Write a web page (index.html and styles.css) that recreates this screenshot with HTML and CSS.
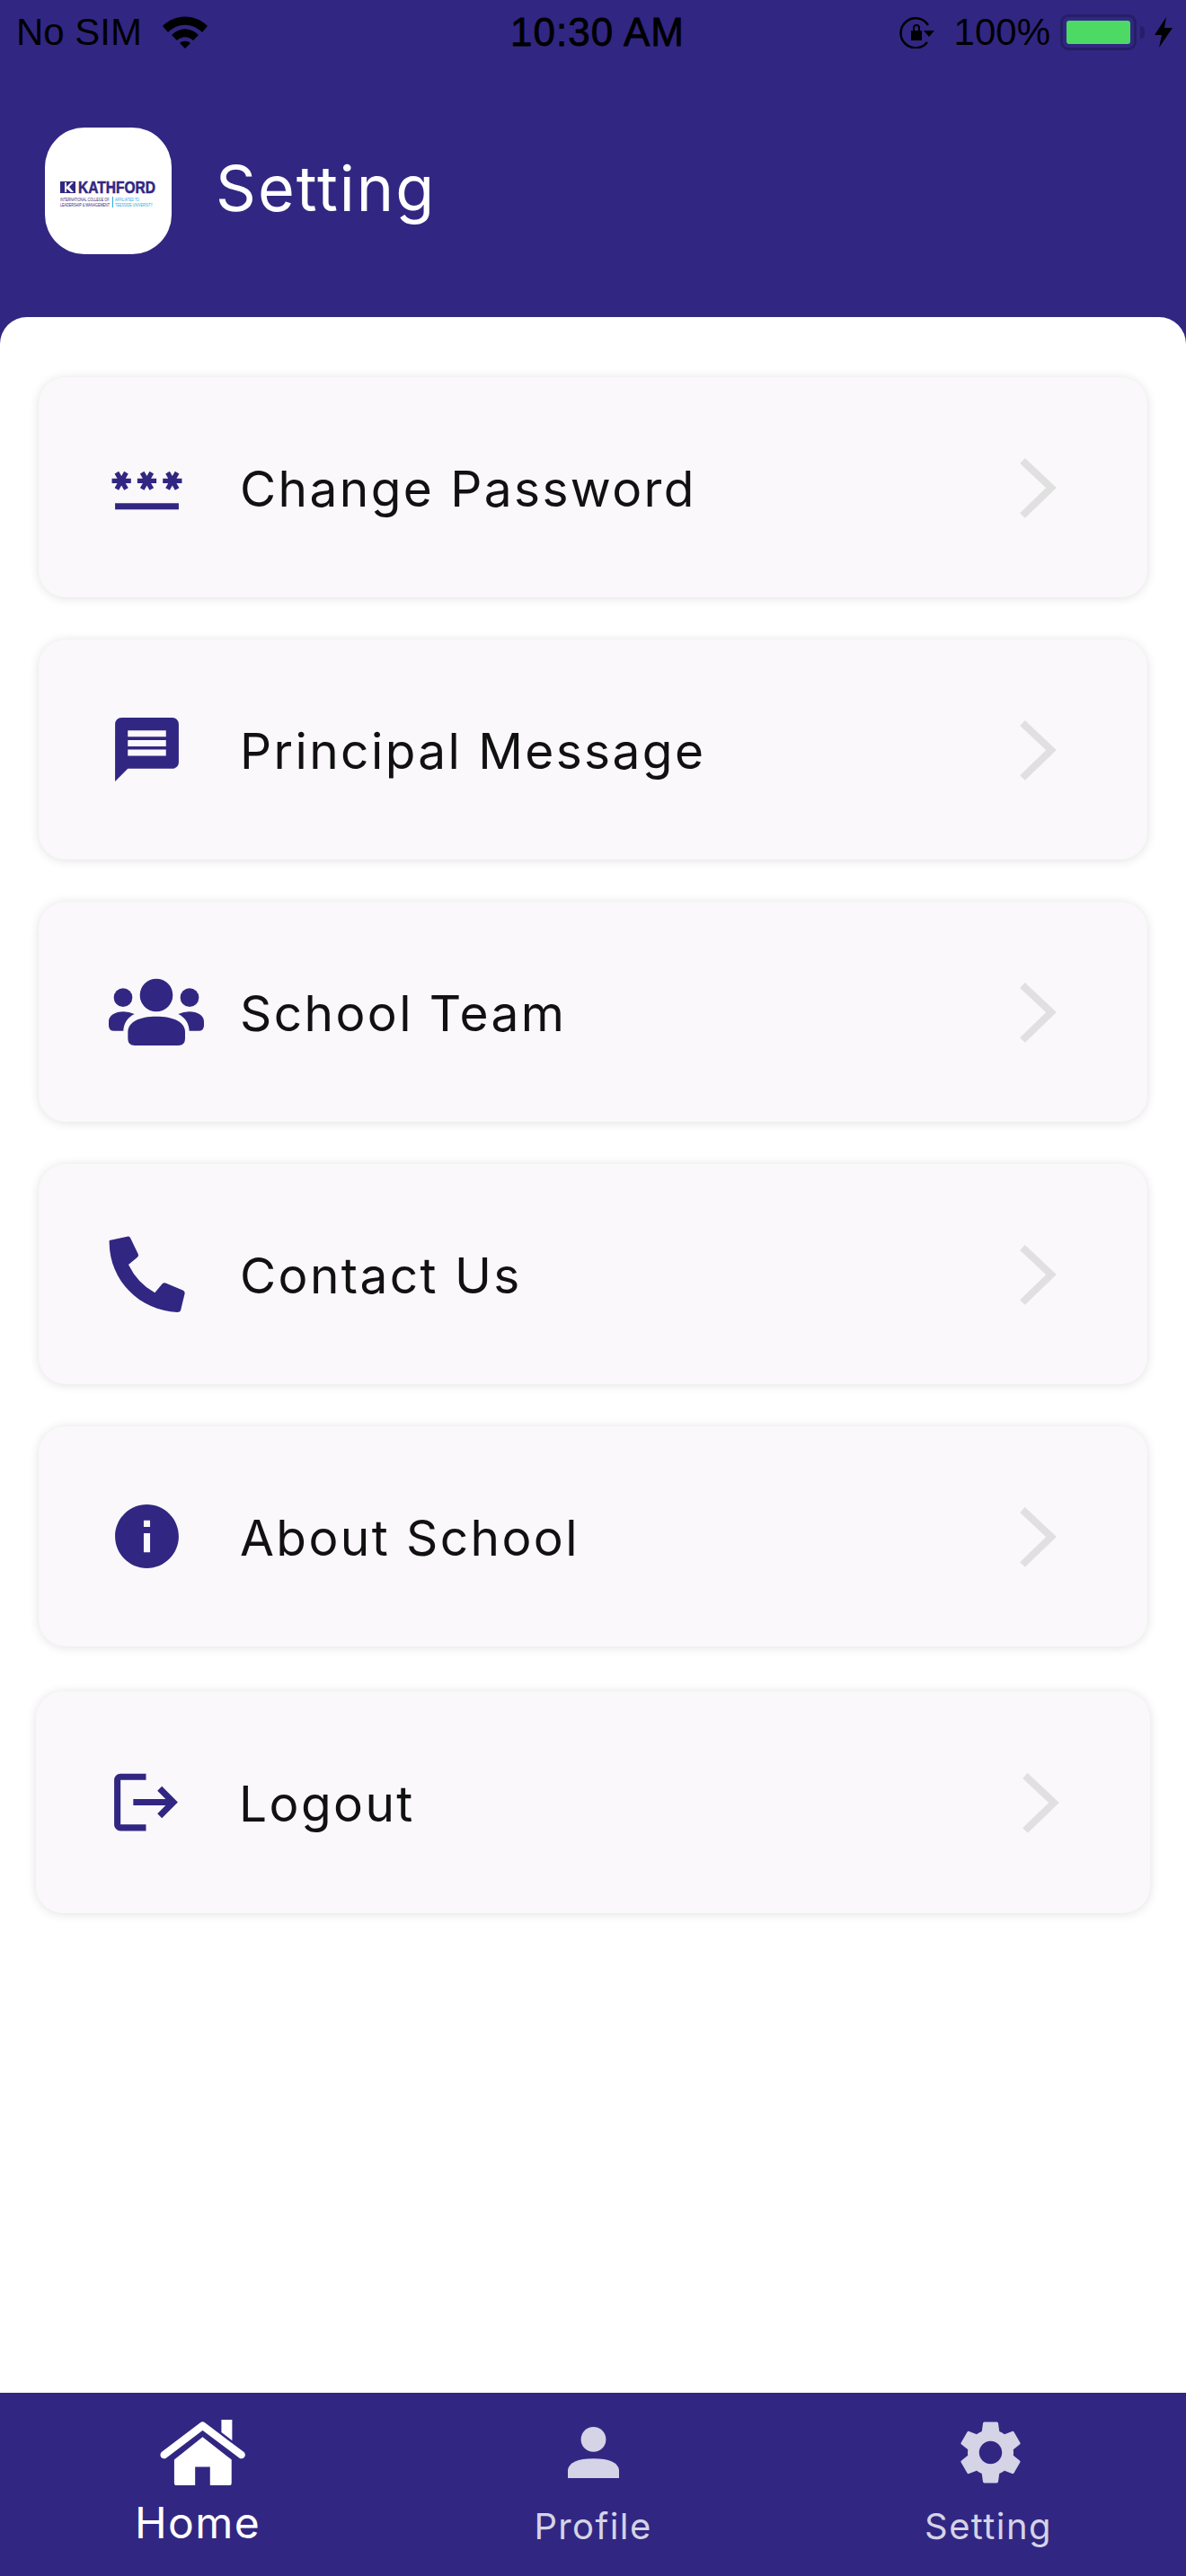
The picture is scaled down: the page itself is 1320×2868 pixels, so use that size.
FILE: index.html
```html
<!DOCTYPE html>
<html lang="en">
<head>
    <meta charset="UTF-8">
    <meta name="viewport" content="width=device-width, initial-scale=1.0">
    <title>Setting</title>
    <link rel="stylesheet" href="styles.css">
</head>
<body>
    <div class="page">
        <div class="status-bar">
            <div class="status-left">
                <span>No SIM</span>
                <svg class="wifi" viewBox="0 0 50 36">
                    <path d="M0 11C14-3 36-3 50 11L44 18C33 7 17 7 6 18Z"/>
                    <path d="M10 21C19 12 31 12 40 21L34 27C28 22 22 22 16 27Z"/>
                    <path d="M19 30C22 27 28 27 31 30L25 36Z"/>
                </svg>
            </div>
            <div class="status-time">10:30 AM</div>
            <div class="status-right">
                <svg class="rotation-lock" viewBox="0 0 40 36">
                    <path d="M32 29A16.500 16.500 0 1 1 33 10" fill="none" stroke="#000" stroke-width="2.500"/>
                    <path d="M28 16H40L34 23Z"/>
                    <path d="M14 16h12v11H14zM16 16v-3a4 4 0 0 1 8 0v3h-2v-3a2 2 0 0 0-4 0v3z"/>
                </svg>
                <span class="battery-text">100%</span>
                <span class="battery"><span class="battery-fill"></span></span>
                <span class="battery-nib"></span>
                <svg class="bolt" viewBox="0 0 20 34"><path d="M13 0L0 20H8L5 34L20 12H11Z"/></svg>
            </div>
        </div>

        <header class="app-header">
            <div class="logo">
                <svg viewBox="0 0 141 141">
                    <rect x="17" y="60" width="17" height="13" fill="#312782"/>
                    <path d="M22 61h2v5l5-5h3l-5 5 5 6h-3l-5-4v4h-2z" fill="#fff"/>
                    <text class="logo-name" x="37" y="73" textLength="86" lengthAdjust="spacingAndGlyphs">KATHFORD</text>
                    <g transform="translate(17 0) scale(0.75 1)">
                        <text class="logo-sub" y="82">INTERNATIONAL COLLEGE OF</text>
                        <text class="logo-sub" y="88">LEADERSHIP &amp; MANAGEMENT</text>
                    </g>
                    <rect x="75" y="77" width="1" height="12" fill="#27aae1"/>
                    <g transform="translate(78 0) scale(0.75 1)">
                        <text class="logo-sub logo-sub-blue" y="82">AFFILIATED TO</text>
                        <text class="logo-sub logo-sub-blue" y="88">TEESSIDE UNIVERSITY</text>
                    </g>
                </svg>
            </div>
            <h1>Setting</h1>
        </header>

        <main class="sheet">
            <a class="card">
                <span class="card-icon">
                    <svg class="icon" viewBox="0 0 24 24"><path d="M2 17h20v2H2v-2zm1.150-4.050L4 11.470l.85 1.480 1.300-.75-.85-1.480H7v-1.500H5.300l.85-1.470L4.850 7 4 8.470 3.150 7l-1.300.75.85 1.470H1v1.500h1.700l-.85 1.480 1.300.75zm6.700-.75 1.300.75.85-1.480.85 1.480 1.300-.75-.85-1.480H15v-1.500h-1.700l.85-1.470-1.300-.75L12 8.470 11.150 7l-1.300.75.85 1.470H9v1.500h1.700l-.85 1.480zM23 9.220h-1.700l.85-1.470-1.300-.75L20 8.470 19.150 7l-1.300.75.85 1.470H17v1.500h1.700l-.85 1.480 1.300.75.85-1.480.85 1.480 1.300-.75-.85-1.480H23v-1.500z"/></svg>
                </span>
                <span class="card-label">Change Password</span>
                <svg class="chevron" viewBox="0 0 50 80"><path d="M8 10L40 40L8 71"/></svg>
            </a>
            <a class="card">
                <span class="card-icon">
                    <svg class="icon" viewBox="0 0 24 24"><path d="M20 2H4c-1.100 0-1.990.9-1.990 2L2 22l4-4h14c1.100 0 2-.9 2-2V4c0-1.100-.9-2-2-2zm-2 12H6v-2h12v2zm0-3H6V9h12v2zm0-3H6V6h12v2z"/></svg>
                </span>
                <span class="card-label">Principal Message</span>
                <svg class="chevron" viewBox="0 0 50 80"><path d="M8 10L40 40L8 71"/></svg>
            </a>
            <a class="card">
                <span class="card-icon">
                    <svg class="icon-group" viewBox="36 60 318 225">
                        <circle cx="195" cy="117" r="55"/>
                        <circle cx="84" cy="125" r="31"/>
                        <circle cx="306" cy="125" r="31"/>
                        <path d="M100 240C100 205 140 188 195 188S291 205 291 240V262Q291 285 268 285H123Q100 285 100 262Z"/>
                        <path d="M36 205C36 185 58 172 85 172Q104 172 122 180C98 192 86 212 85 236H54Q36 236 36 218Z"/>
                        <path d="M354 205C354 185 332 172 305 172Q286 172 268 180C292 192 304 212 305 236H336Q354 236 354 218Z"/>
                    </svg>
                </span>
                <span class="card-label">School Team</span>
                <svg class="chevron" viewBox="0 0 50 80"><path d="M8 10L40 40L8 71"/></svg>
            </a>
            <a class="card">
                <span class="card-icon">
                    <svg class="icon" viewBox="276 230 255 255"><path d="M278 245L338 232Q345 230 348 236L375 292Q376 298 371 302L342 326Q372 388 430 420L455 390Q460 385 468 388L525 412Q531 416 530 422L516 480Q514 485 505 485C380 480 280 380 278 255Z"/></svg>
                </span>
                <span class="card-label">Contact Us</span>
                <svg class="chevron" viewBox="0 0 50 80"><path d="M8 10L40 40L8 71"/></svg>
            </a>
            <a class="card">
                <span class="card-icon">
                    <svg class="icon" viewBox="0 0 24 24"><path d="M12 2C6.480 2 2 6.480 2 12s4.480 10 10 10 10-4.480 10-10S17.520 2 12 2zm1 15h-2v-6h2v6zm0-8h-2V7h2v2z"/></svg>
                </span>
                <span class="card-label">About School</span>
                <svg class="chevron" viewBox="0 0 50 80"><path d="M8 10L40 40L8 71"/></svg>
            </a>
            <a class="card card-logout">
                <span class="card-icon">
                    <svg class="icon" viewBox="0 0 24 24"><path d="M17 7l-1.410 1.410L18.170 11H8v2h10.170l-2.580 2.580L17 17l5-5zM4 5h8V3H4c-1.100 0-2 .9-2 2v14c0 1.100.9 2 2 2h8v-2H4V5z"/></svg>
                </span>
                <span class="card-label">Logout</span>
                <svg class="chevron" viewBox="0 0 50 80"><path d="M8 10L40 40L8 71"/></svg>
            </a>
        </main>

        <nav class="tab-bar">
            <div class="tab tab-active">
                <span class="tab-icon">
                    <svg class="tab-home" viewBox="22 40 316 224">
                        <path d="M258 42H294V112L258 84Z"/>
                        <path d="M66 160L195 62L325 160" fill="none" stroke="#fff" stroke-width="25" stroke-linecap="round" stroke-linejoin="round"/>
                        <path d="M100 176L195 100L292 176V254Q292 262 284 262H220V200H170V262H108Q100 262 100 254Z"/>
                    </svg>
                </span>
                <span class="tab-label">Home</span>
            </div>
            <div class="tab">
                <span class="tab-icon">
                    <svg class="tab-person" viewBox="66 39 168 168">
                        <circle cx="150" cy="80" r="41"/>
                        <path d="M66 207V180Q72 143 150 143T234 180V207Z"/>
                    </svg>
                </span>
                <span class="tab-label">Profile</span>
            </div>
            <div class="tab">
                <span class="tab-icon">
                    <svg class="tab-gear" viewBox="0 0 24 24"><path d="M19.140 12.940c.04-.3.06-.61.06-.94 0-.32-.02-.64-.07-.94l2.030-1.580c.18-.14.23-.41.12-.61l-1.920-3.320c-.12-.22-.37-.29-.59-.22l-2.390.96c-.5-.38-1.030-.7-1.620-.94L14.400 2.810c-.04-.24-.24-.41-.48-.41h-3.840c-.24 0-.43.17-.47.41L9.250 5.350c-.59.24-1.130.57-1.620.94l-2.390-.96c-.22-.08-.47 0-.59.22L2.740 8.870c-.12.21-.08.47.12.61l2.030 1.580c-.05.3-.09.63-.09.94s.02.64.07.94l-2.030 1.580c-.18.14-.23.41-.12.61l1.920 3.320c.12.22.37.29.59.22l2.390-.96c.5.38 1.030.7 1.620.94l.36 2.540c.05.24.24.41.48.41h3.840c.24 0 .44-.17.47-.41l.36-2.540c.59-.24 1.130-.56 1.620-.94l2.390.96c.22.08.47 0 .59-.22l1.920-3.320c.12-.22.07-.47-.12-.61l-2.010-1.580zM12 15.600c-1.980 0-3.600-1.620-3.600-3.600s1.620-3.600 3.600-3.600 3.600 1.620 3.600 3.600-1.620 3.600-3.600 3.600z"/></svg>
                </span>
                <span class="tab-label">Setting</span>
            </div>
        </nav>
    </div>
</body>
</html>
```

FILE: styles.css
```css
* {
    box-sizing: border-box;
    margin: 0;
    padding: 0;
}

body {
    font-family: Inter, Roboto, sans-serif;
    background-color: #312782;
    overflow: hidden;
}

.page {
    width: 1320px;
    height: 2868px;
    display: flex;
    flex-direction: column;
    background-color: #312782;
}

/* status bar */
.status-bar {
    height: 72px;
    display: grid;
    grid-template-columns: 1fr auto 1fr;
    align-items: center;
    padding: 0 15px 0 18px;
    color: #000;
    font-family: "Liberation Sans", sans-serif;
    font-size: 42px;
}

.status-left, .status-right {
    display: flex;
    align-items: center;
}

.status-right {
    justify-content: flex-end;
}

.wifi {
    width: 50px;
    height: 36px;
    margin-left: 23px;
    fill: #000;
}

.status-time {
    margin-left: 7px;
    font-size: 44px;
    letter-spacing: 1px;
    -webkit-text-stroke: 0.8px #000;
}

.rotation-lock {
    width: 40px;
    height: 36px;
    fill: #000;
}

.battery-text {
    margin-left: 22px;
}

.battery {
    width: 85px;
    height: 40px;
    margin-left: 11px;
    padding: 4px;
    border: 3px solid #251e68;
    border-radius: 9px;
}

.battery-fill {
    display: block;
    height: 100%;
    background-color: #4cd964;
    border-radius: 3px;
}

.battery-nib {
    width: 5px;
    height: 14px;
    margin-left: 4px;
    background-color: #251e68;
    border-radius: 0 5px 5px 0;
}

.bolt {
    width: 20px;
    height: 34px;
    margin-left: 11px;
    fill: #000;
}

/* app header */
.app-header {
    display: flex;
    align-items: center;
    gap: 49px;
    padding: 70px 50px;
}

.logo {
    width: 141px;
    height: 141px;
    background-color: white;
    border-radius: 44px;
}

.logo svg {
    display: block;
}

.logo-name {
    font-family: "Liberation Sans", sans-serif;
    font-size: 18px;
    font-weight: bold;
    fill: #312782;
    stroke: #312782;
    stroke-width: 0.5;
}

.logo-sub {
    font-family: "Liberation Sans", sans-serif;
    font-size: 5px;
    fill: #312782;
}

.logo-sub-blue {
    fill: #27aae1;
}

h1 {
    margin-top: -6px;
    color: white;
    font-size: 70px;
    font-weight: 400;
    letter-spacing: 2px;
}

/* settings list */
.sheet {
    flex: 1;
    display: flex;
    flex-direction: column;
    gap: 47px;
    padding: 67px 43px 0;
    background-color: white;
    border-radius: 30px 30px 0 0;
}

.card {
    height: 245px;
    display: flex;
    align-items: center;
    padding: 0 97px 0 78px;
    background-color: #faf8fa;
    border-radius: 30px;
    box-shadow: 0 1px 12px rgba(0, 0, 0, 0.12);
}

.card-logout {
    height: 247px;
    margin: 3px -3px 0;
    padding-left: 80px;
}

.card-icon {
    width: 146px;
    flex-shrink: 0;
    display: flex;
    align-items: center;
    fill: #312782;
}

.icon {
    width: 85px;
    height: 85px;
}

.icon-group {
    width: 106px;
    height: 75px;
}

.card-label {
    flex: 1;
    padding-top: 3px;
    color: #111;
    font-size: 55px;
    letter-spacing: 2.4px;
}

.chevron {
    width: 50px;
    height: 80px;
    fill: none;
    stroke: #e0e0e0;
    stroke-width: 8;
}

/* bottom tabs */
.tab-bar {
    height: 204px;
    display: grid;
    grid-template-columns: repeat(3, 1fr);
    padding-top: 24px;
}

.tab {
    display: flex;
    flex-direction: column;
    align-items: center;
    color: #d5d3e6;
    fill: #d5d3e6;
}

.tab-active {
    color: white;
    fill: white;
}

.tab-icon {
    height: 85px;
    display: flex;
    align-items: center;
}

.tab-home {
    width: 105px;
    height: 75px;
}

.tab-person {
    width: 57px;
    height: 57px;
}

.tab-gear {
    width: 85px;
    height: 85px;
    margin-left: 4px;
}

.tab-label {
    margin-top: 14px;
    font-size: 40px;
    line-height: 52px;
    letter-spacing: 1.4px;
}

.tab-active .tab-label {
    margin-top: 10px;
    font-size: 48px;
}
```
